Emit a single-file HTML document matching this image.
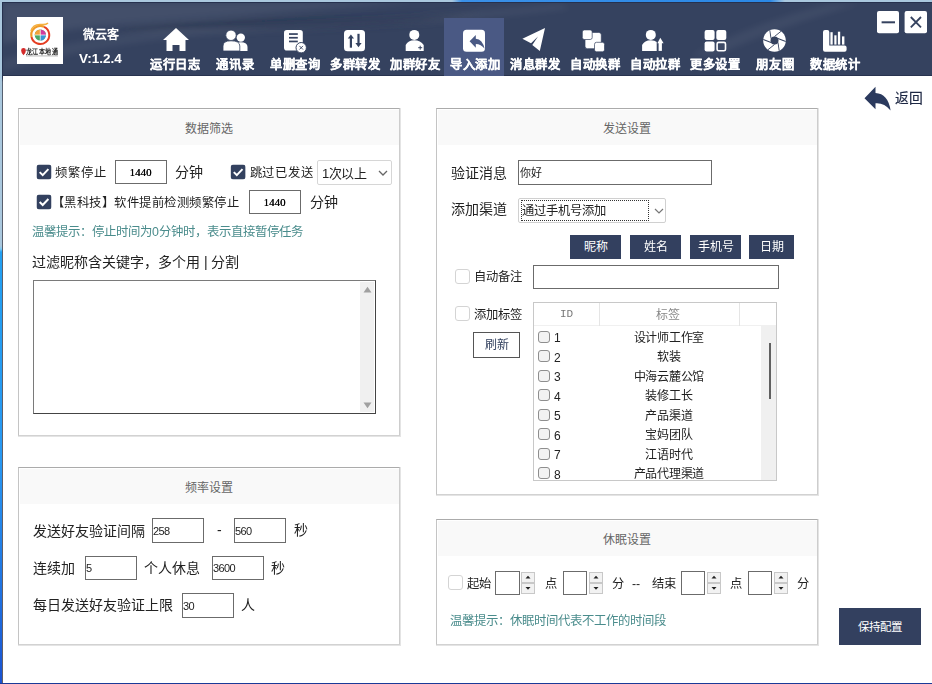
<!DOCTYPE html>
<html lang="zh-CN"><head><meta charset="utf-8">
<style>
*{box-sizing:border-box;margin:0;padding:0}
html,body{width:932px;height:684px;overflow:hidden;background:#fff;font-family:"Liberation Sans",sans-serif;color:#222}
.a{position:absolute}
#win{position:absolute;left:0;top:0;width:932px;height:684px;background:#fff}
#lstrip{position:absolute;left:0;top:0;width:2px;height:684px;background:linear-gradient(#aac8de 0,#aac8de 246px,#7ccaf6 249px,#22a0f2 252px,#2898f2 460px,#1f70e0 600px,#1a52d0 684px)}
#ldark{position:absolute;left:2px;top:2px;width:1px;height:682px;background:linear-gradient(#26314e 0,#26314e 76px,#566070 80px,#635f66 684px)}
#tdark{position:absolute;left:2px;top:2px;width:930px;height:1px;background:#26314e}
#tstrip{position:absolute;left:0;top:0;width:932px;height:2px;background:linear-gradient(90deg,#aac8de 0,#aac8de 452px,#3a90e8 462px,#2a88e6 770px,#aac8de 785px,#aac8de 932px)}
#bline{position:absolute;left:0;top:683px;width:932px;height:1px;background:#1a3a98}
#hdr{position:absolute;left:2px;top:2px;width:930px;height:74px;background:#35425f;overflow:hidden}
.nav{position:absolute;top:0;width:60px;height:74px;color:#fff;font-weight:bold;font-size:12.3px;letter-spacing:0.8px;text-indent:0.8px;text-align:center;-webkit-text-stroke:0.25px #fff}
.nav span{position:absolute;left:0;width:60px;top:58px;line-height:14px;white-space:nowrap}
.nav svg{position:absolute;left:18px;top:26px}
.panel{position:absolute;border-top:1px solid #ababab;border-left:1px solid #c4c4c4;border-right:1px solid #cdcdcd;border-bottom:1px solid #d2d2d2;box-shadow:1px 0 0 #e4e4e4,0 1px 0 #e4e4e4,1px 1px 0 #e4e4e4}
.ph{position:absolute;left:1px;right:0;top:1px;height:35px;background:#f9f9f9;text-align:center;font-size:12px;color:#666;line-height:38px;padding-right:2px}
.t{position:absolute;white-space:nowrap;line-height:1}
.inp{position:absolute;border:1px solid #6b6b6b;background:#fff}
.cbn{position:absolute;width:15px;height:15px;background:#33415f;border-radius:3px}
.cbe{position:absolute;width:15px;height:15px;border:1px solid #d4d4d4;border-radius:3px;background:#fff}
.btn{position:absolute;background:#33405f;color:#fff;font-size:12px;text-align:center}
.tip{color:#4a8c8c;font-size:12px}
</style></head><body>
<div id="win">
<div id="hdr"></div>
<div class="a" style="left:2px;top:75px;width:930px;height:1px;background:#28334f"></div>
<svg class="a" style="left:0;top:0" width="932" height="76">
 <defs>
  <filter id="bl" x="-20%" y="-50%" width="140%" height="200%"><feGaussianBlur stdDeviation="3"/></filter>
 </defs>
 <g filter="url(#bl)">
 <path d="M2 2 L420 2 Q260 14 120 24 Q50 30 2 44 Z" fill="#fff" opacity="0.07"/>
 <path d="M2 60 Q90 32 260 24 Q420 17 560 4 L570 9 Q430 26 270 31 Q110 38 2 72 Z" fill="#fff" opacity="0.05"/>
 <path d="M690 56 Q760 20 830 4 L860 4 Q780 26 715 56 Z" fill="#fff" opacity="0.05"/>
 <path d="M100 31 Q200 19 300 18 Q420 17 480 12 Q430 26 300 29 Q200 30 100 31 Z" fill="#141d38" opacity="0.22"/>
 </g>
</svg>

<div class="a" style="left:444px;top:18px;width:60px;height:58px;background:#4a5984"></div>
<div class="a" style="left:17px;top:17px;width:46px;height:47px;background:#fff"></div>
<svg class="a" style="left:0;top:0" width="932" height="76" viewBox="0 0 932 76">
 <!-- logo -->
 <path d="M31.5 37 A9 9 0 0 1 44 26.8" fill="none" stroke="#f09a28" stroke-width="2.2"/>
 <path d="M31 31 Q33 24 41 24.5 Q46 25 48 23" fill="none" stroke="#f5b040" stroke-width="1.6"/>
 <path d="M44 26.8 A9 9 0 1 1 31.5 37" fill="none" stroke="#e43d22" stroke-width="2"/>
 <circle cx="40.3" cy="35" r="5.6" fill="#4aa868"/>
 <path d="M40.3 35 L40.3 29.4 A5.6 5.6 0 0 1 45.9 35 Z" fill="#d33a9e"/>
 <path d="M40.3 35 L45.9 35 A5.6 5.6 0 0 1 40.3 40.6 Z" fill="#3c92d6"/>
 <path d="M40.3 35 L34.7 35 A5.6 5.6 0 0 1 40.3 29.4 Z" fill="#f2a23a"/>
 <path d="M40.3 29.4 L40.3 40.6 M34.7 35 L45.9 35" stroke="#fff" stroke-width="0.7"/>
 <path d="M23.5 48 a2.4 2.4 0 0 1 2.4 2.4 q0 2.2 -2.4 4.8 q-2.4 -2.6 -2.4 -4.8 a2.4 2.4 0 0 1 2.4 -2.4z" fill="#d42a2a"/>
 <text x="26" y="54" font-size="6.6" font-weight="bold" fill="#1a1a1a" font-family="Liberation Sans" textLength="32" lengthAdjust="spacingAndGlyphs">龙江本地通</text>
 <rect x="26" y="55.6" width="32" height="0.7" fill="#999"/>
 <!-- house -->
 <path d="M176 28 L189 40 L185.5 40 L185.5 51 L179.5 51 L179.5 45 L172.5 45 L172.5 51 L166.5 51 L166.5 40 L163 40 Z" fill="#fff"/>
 <!-- people -->
 <circle cx="240.8" cy="37.6" r="4.2" fill="#fff"/>
 <path d="M236 51 L236 45 Q236 42.3 240.8 42.3 Q247.5 42.3 247.5 47 L247.5 51 Z" fill="#fff"/>
 <circle cx="231" cy="35.3" r="5.2" fill="#fff" stroke="#35425f" stroke-width="0.8"/>
 <path d="M223 51 L223 46 Q223 40.8 231 40.8 Q239.8 40.8 239.8 46 L239.8 51 Z" fill="#fff" stroke="#35425f" stroke-width="0.8"/>
 <!-- doc x -->
 <rect x="284" y="30" width="18.8" height="20.5" rx="2.8" fill="#fff"/>
 <rect x="289" y="33.199999999999996" width="8.8" height="1.7" fill="#35425f"/>
 <rect x="289" y="36.9" width="8.8" height="1.7" fill="#35425f"/>
 <rect x="289" y="40.6" width="8.8" height="1.7" fill="#35425f"/>
 <circle cx="301.2" cy="47.7" r="5.2" fill="#fff" stroke="#35425f" stroke-width="1"/>
 <path d="M299.4 45.9 L303 49.5 M303 45.9 L299.4 49.5" stroke="#35425f" stroke-width="0.9"/>
 <!-- arrows -->
 <rect x="344" y="30" width="21" height="21.2" rx="3.5" fill="#fff"/>
 <path d="M350.9 47.7 L350.9 37.5" stroke="#35425f" stroke-width="2.2"/>
 <path d="M347.8 38.5 L350.9 34.5 L354 38.5 Z" fill="#35425f"/>
 <path d="M358.5 33.8 L358.5 44" stroke="#35425f" stroke-width="2.2"/>
 <path d="M355.4 43 L358.5 47.3 L361.6 43 Z" fill="#35425f"/>
 <!-- person plus -->
 <circle cx="414.3" cy="34.9" r="5" fill="#fff"/>
 <path d="M405.7 51.1 L405.7 45 Q408 40.2 414.3 40.2 Q420.6 40.2 423.7 45 L423.7 51.1 Z" fill="#fff"/>
 <path d="M420.2 45.7 L420.2 49.7 M418.2 47.7 L422.2 47.7" stroke="#35425f" stroke-width="1"/>
 <!-- reply -->
 <rect x="463" y="29.7" width="22" height="22.1" rx="3.5" fill="#fff"/>
 <path d="M469.6 41.3 L475.8 34.9 L475.8 38.8 Q482.5 39.3 484.6 48.8 Q481 44 475.8 44 L475.8 47.7 Z" fill="#4a5984"/>
 <!-- plane -->
 <path d="M545 28 L522.4 38.8 L531 43.3 L538 36.5 L532.3 45 L539.8 51.1 Z" fill="#fff"/>
 <!-- overlapping squares -->
 <rect x="585" y="32.4" width="16.3" height="16.3" rx="2.5" fill="#fff" stroke="#35425f" stroke-width="0.7"/>
 <rect x="582.3" y="29.9" width="9.9" height="9.6" rx="2" fill="#fff" stroke="#35425f" stroke-width="0.7"/>
 <rect x="594.5" y="42.3" width="10" height="9.5" rx="2" fill="#fff" stroke="#35425f" stroke-width="0.7"/>
 <!-- person up -->
 <circle cx="650.8" cy="34.9" r="5" fill="#fff"/>
 <path d="M642.1 50.9 L642.1 45 Q644.5 40.2 650.8 40.2 Q655 40.2 656.7 42 L656.7 50.9 Z" fill="#fff"/>
 <rect x="658.6" y="42.3" width="3.3" height="8.6" fill="#fff"/>
 <path d="M657.4 43.2 L660.3 37.8 L663.6 43.2 Z" fill="#fff"/>
 <!-- grid -->
 <rect x="704.6" y="30.1" width="10" height="10" rx="2" fill="#fff"/>
 <rect x="716.3" y="30.1" width="10" height="10" rx="2" fill="#fff"/>
 <rect x="704.6" y="41.6" width="10" height="10" rx="2" fill="#fff"/>
 <rect x="717.1" y="42.4" width="8.4" height="8.4" rx="1.5" fill="none" stroke="#fff" stroke-width="1.6"/>
 <!-- aperture -->
 <g transform="translate(774.5 40.5)">
  <circle r="11.3" fill="#fff"/>
  <circle r="4" fill="#35425f"/>
  <g stroke="#35425f" stroke-width="0.9">
   <path d="M0 -4 L6.5 -9.2" transform="rotate(0)"/>
   <path d="M0 -4 L6.5 -9.2" transform="rotate(60)"/>
   <path d="M0 -4 L6.5 -9.2" transform="rotate(120)"/>
   <path d="M0 -4 L6.5 -9.2" transform="rotate(180)"/>
   <path d="M0 -4 L6.5 -9.2" transform="rotate(240)"/>
   <path d="M0 -4 L6.5 -9.2" transform="rotate(300)"/>
  </g>
 </g>
 <!-- bar chart -->
 <path d="M823 32 Q823 30 825 30 L827.3 30 Q829.3 30 829.3 32 L829.3 45.6 L844.6 45.6 Q846.6 45.6 846.6 47.6 L846.6 49.8 Q846.6 51.8 844.6 51.8 L825 51.8 Q823 51.8 823 49.8 Z" fill="#fff"/>
 <rect x="830.4" y="32.2" width="2.3" height="12.4" fill="#fff"/>
 <rect x="834.3" y="35.3" width="2.2" height="9.3" fill="#fff"/>
 <rect x="837.9" y="31.7" width="2.3" height="12.9" fill="#fff"/>
 <rect x="842" y="36.4" width="2.4" height="8.2" fill="#fff"/>
 <!-- window buttons -->
 <rect x="877" y="11" width="22" height="22.3" rx="2" fill="#fff"/>
 <rect x="881.6" y="21.3" width="13.4" height="2" fill="#35425f"/>
 <rect x="904.6" y="11" width="22.4" height="22.3" rx="2" fill="#fff"/>
 <path d="M910.8 17 L921 27.3 M921 17 L910.8 27.3" stroke="#35425f" stroke-width="1.8"/>
</svg>
<div class="t" style="left:83px;top:29px;font-size:12px;font-weight:bold;color:#fff">微云客</div>
<div class="t" style="left:79px;top:52px;font-size:13.5px;font-weight:bold;color:#fff">V:1.2.4</div>
<div class="nav" style="left:145px"><span>运行日志</span></div>
<div class="nav" style="left:205px"><span>通讯录</span></div>
<div class="nav" style="left:265px"><span>单删查询</span></div>
<div class="nav" style="left:325px"><span>多群转发</span></div>
<div class="nav" style="left:385px"><span>加群好友</span></div>
<div class="nav" style="left:445px"><span>导入添加</span></div>
<div class="nav" style="left:505px"><span>消息群发</span></div>
<div class="nav" style="left:565px"><span>自动换群</span></div>
<div class="nav" style="left:625px"><span>自动拉群</span></div>
<div class="nav" style="left:685px"><span>更多设置</span></div>
<div class="nav" style="left:745px"><span>朋友圈</span></div>
<div class="nav" style="left:805px"><span>数据统计</span></div>

<div id="tstrip"></div>
<div id="lstrip"></div>
<div id="ldark"></div><div id="tdark"></div>
<div id="bline"></div>

<!-- panel 1 -->
<div class="panel" style="left:18px;top:108px;width:382px;height:328px"><div class="ph">数据筛选</div></div>
<!-- panel 2 -->
<div class="panel" style="left:18px;top:467px;width:382px;height:178px"><div class="ph">频率设置</div></div>
<!-- panel 3 -->
<div class="panel" style="left:436px;top:108px;width:382px;height:387px"><div class="ph">发送设置</div></div>
<!-- panel 4 -->
<div class="panel" style="left:436px;top:519px;width:382px;height:126px"><div class="ph">休眠设置</div></div>

<!-- panel 1 content -->
<svg class="a" style="left:0;top:0" width="932" height="684">
 <defs><symbol id="ck" viewBox="0 0 15 15"><rect width="15" height="15" rx="3" fill="#33415f"/><path d="M3.2 7.6 L6.2 10.6 L11.9 4.6" fill="none" stroke="#fff" stroke-width="2"/></symbol></defs>
 <use href="#ck" x="36.5" y="164.5" width="15" height="15"/>
 <use href="#ck" x="230.6" y="164.5" width="15" height="15"/>
 <use href="#ck" x="36.5" y="194.4" width="15" height="15"/>
</svg>
<div class="t" style="left:55px;top:166.5px;font-size:12.3px;letter-spacing:0.9px">频繁停止</div>
<div class="inp" style="left:115px;top:160px;width:52px;height:24px;font-family:'Liberation Serif',serif;font-size:11px;text-align:center;line-height:23px;color:#000;text-shadow:0.3px 0 0 #000;padding-right:1px">1440</div>
<div class="t" style="left:175px;top:165px;font-size:14px">分钟</div>
<div class="t" style="left:249.5px;top:166.5px;font-size:12.3px;letter-spacing:0.8px">跳过已发送</div>
<div class="a" style="left:317px;top:160px;width:75px;height:25px;border:1px solid #d6d6d6;border-radius:2px;font-size:13px;line-height:25px;padding-left:4px;letter-spacing:-0.4px">1次以上</div>
<svg class="a" style="left:378px;top:170px" width="10" height="7"><path d="M1 1 L5 5 L9 1" fill="none" stroke="#666" stroke-width="1.3"/></svg>
<div class="t" style="left:51.5px;top:196.5px;font-size:12.3px;letter-spacing:0.5px">【黑科技】软件提前检测频繁停止</div>
<div class="inp" style="left:249px;top:190px;width:52px;height:24px;font-family:'Liberation Serif',serif;font-size:11px;text-align:center;line-height:23px;color:#000;text-shadow:0.3px 0 0 #000;padding-right:1px">1440</div>
<div class="t" style="left:310px;top:195px;font-size:14px">分钟</div>
<div class="t tip" style="left:32px;top:225.5px;font-size:12.4px">温馨提示：停止时间为0分钟时，表示直接暂停任务</div>
<div class="t" style="left:32px;top:255px;font-size:14px">过滤昵称含关键字，多个用 | 分割</div>
<div class="a" style="left:33px;top:280px;width:343px;height:134px;border:1px solid #7a7a7a;border-right-color:#444;border-bottom-color:#444;background:#fff">
 <div class="a" style="right:1px;top:1px;width:14px;height:130px;background:#f0f0f0"></div>
 <svg class="a" style="right:3.5px;top:4.5px" width="9" height="7"><path d="M0.5 6.5 L4.5 0.8 L8.5 6.5Z" fill="#a0a0a0"/></svg>
 <svg class="a" style="right:3.5px;bottom:4.5px" width="9" height="7"><path d="M0.5 0.5 L4.5 6.2 L8.5 0.5Z" fill="#a0a0a0"/></svg>
</div>
<!-- panel 2 content -->
<div class="t" style="left:33px;top:523.5px;font-size:14px">发送好友验证间隔</div>
<div class="inp" style="left:152px;top:518px;width:52px;height:25px;font-size:11px;line-height:24px;padding-left:0;letter-spacing:-0.6px">258</div>
<div class="t" style="left:217px;top:523px;font-size:14px">-</div>
<div class="inp" style="left:234px;top:518px;width:52px;height:25px;font-size:11px;line-height:24px;padding-left:0;letter-spacing:-0.6px">560</div>
<div class="t" style="left:294px;top:523px;font-size:14px">秒</div>
<div class="t" style="left:33px;top:561px;font-size:14px">连续加</div>
<div class="inp" style="left:85px;top:556px;width:52px;height:24px;font-size:11px;line-height:23px;padding-left:0;letter-spacing:-0.6px">5</div>
<div class="t" style="left:144px;top:561px;font-size:14px">个人休息</div>
<div class="inp" style="left:212px;top:556px;width:52px;height:24px;font-size:11px;line-height:23px;padding-left:0;letter-spacing:-0.6px">3600</div>
<div class="t" style="left:271px;top:561px;font-size:14px">秒</div>
<div class="t" style="left:33px;top:598px;font-size:14px">每日发送好友验证上限</div>
<div class="inp" style="left:182px;top:593px;width:52px;height:25px;font-size:11px;line-height:24px;padding-left:0;letter-spacing:-0.6px">30</div>
<div class="t" style="left:241px;top:598px;font-size:14px">人</div>
<!-- panel 3 content -->
<div class="t" style="left:451px;top:166px;font-size:14px">验证消息</div>
<div class="inp" style="left:518px;top:160px;width:194px;height:24.5px;font-size:11px;line-height:24px;padding-left:1px">你好</div>
<div class="t" style="left:451px;top:202px;font-size:14px">添加渠道</div>
<div class="a" style="left:518px;top:197.5px;width:148px;height:25.5px;border:1px solid #d0d0d0;border-radius:2px;background:#fff"></div>
<div class="a" style="left:521px;top:200px;width:128px;height:21px;border:1px dotted #333;font-size:12.3px;line-height:21px;padding-left:0">通过手机号添加</div>
<svg class="a" style="left:654px;top:208px" width="10" height="7"><path d="M1 1 L5 5 L9 1" fill="none" stroke="#777" stroke-width="1.2"/></svg>
<div class="btn" style="left:570px;top:235px;width:51px;height:24px;line-height:24px">昵称</div>
<div class="btn" style="left:630px;top:235px;width:51px;height:24px;line-height:24px">姓名</div>
<div class="btn" style="left:690px;top:235px;width:51px;height:24px;line-height:24px">手机号</div>
<div class="btn" style="left:749px;top:235px;width:45px;height:24px;line-height:24px">日期</div>
<div class="cbe" style="left:454.5px;top:268.5px"></div>
<div class="t" style="left:473.5px;top:270.5px;font-size:12.3px">自动备注</div>
<div class="inp" style="left:533px;top:265px;width:246px;height:24px"></div>
<div class="cbe" style="left:454.5px;top:306px"></div>
<div class="t" style="left:473.5px;top:309px;font-size:12.3px">添加标签</div>
<div class="a" style="left:473px;top:332px;width:47px;height:26px;border:1px solid #555;background:#fff;font-size:12px;color:#33415f;text-align:center;line-height:24px">刷新</div>
<div class="a" style="left:533px;top:302px;width:244px;height:179px;border:1px solid #c8c8c8;background:#fff;overflow:hidden">
 <div class="a" style="left:0;top:0;width:242px;height:23px;background:#fff;border-bottom:1px solid #f0f0f0"></div>
 <div class="a" style="left:65px;top:0;width:1px;height:23px;background:#e5e5e5"></div>
 <div class="a" style="left:205px;top:0;width:1px;height:23px;background:#e5e5e5"></div>
 <div class="t" style="left:26px;top:6px;font-family:'Liberation Mono',monospace;font-size:11px;color:#777">ID</div>
 <div class="t" style="left:122px;top:6px;font-size:12px;color:#888">标签</div>
 <div class="a" style="left:227px;top:23px;width:16px;height:156px;background:#f0f0f0"></div>
 <div class="a" style="left:235px;top:40px;width:2px;height:56px;background:#606060"></div>
</div>
<div class="a" style="left:537.5px;top:330.6px;width:12px;height:12px;border:1px solid #8e8e8e;border-radius:3px;background:#f2f2f2"></div>
<div class="t" style="left:554px;top:332.1px;font-size:12px">1</div>
<div class="t" style="left:599px;width:140px;text-align:center;top:331.6px;font-size:12px;letter-spacing:-0.25px;text-indent:-0.25px">设计师工作室</div>
<div class="a" style="left:537.5px;top:350.2px;width:12px;height:12px;border:1px solid #8e8e8e;border-radius:3px;background:#f2f2f2"></div>
<div class="t" style="left:554px;top:351.7px;font-size:12px">2</div>
<div class="t" style="left:599px;width:140px;text-align:center;top:351.2px;font-size:12px;letter-spacing:-0.25px;text-indent:-0.25px">软装</div>
<div class="a" style="left:537.5px;top:369.7px;width:12px;height:12px;border:1px solid #8e8e8e;border-radius:3px;background:#f2f2f2"></div>
<div class="t" style="left:554px;top:371.2px;font-size:12px">3</div>
<div class="t" style="left:599px;width:140px;text-align:center;top:370.7px;font-size:12px;letter-spacing:-0.25px;text-indent:-0.25px">中海云麓公馆</div>
<div class="a" style="left:537.5px;top:389.3px;width:12px;height:12px;border:1px solid #8e8e8e;border-radius:3px;background:#f2f2f2"></div>
<div class="t" style="left:554px;top:390.8px;font-size:12px">4</div>
<div class="t" style="left:599px;width:140px;text-align:center;top:390.3px;font-size:12px;letter-spacing:-0.25px;text-indent:-0.25px">装修工长</div>
<div class="a" style="left:537.5px;top:408.8px;width:12px;height:12px;border:1px solid #8e8e8e;border-radius:3px;background:#f2f2f2"></div>
<div class="t" style="left:554px;top:410.3px;font-size:12px">5</div>
<div class="t" style="left:599px;width:140px;text-align:center;top:409.8px;font-size:12px;letter-spacing:-0.25px;text-indent:-0.25px">产品渠道</div>
<div class="a" style="left:537.5px;top:428.4px;width:12px;height:12px;border:1px solid #8e8e8e;border-radius:3px;background:#f2f2f2"></div>
<div class="t" style="left:554px;top:429.9px;font-size:12px">6</div>
<div class="t" style="left:599px;width:140px;text-align:center;top:429.4px;font-size:12px;letter-spacing:-0.25px;text-indent:-0.25px">宝妈团队</div>
<div class="a" style="left:537.5px;top:447.9px;width:12px;height:12px;border:1px solid #8e8e8e;border-radius:3px;background:#f2f2f2"></div>
<div class="t" style="left:554px;top:449.4px;font-size:12px">7</div>
<div class="t" style="left:599px;width:140px;text-align:center;top:448.9px;font-size:12px;letter-spacing:-0.25px;text-indent:-0.25px">江语时代</div>
<div class="a" style="left:537.5px;top:467.4px;width:12px;height:12px;border:1px solid #8e8e8e;border-radius:3px;background:#f2f2f2"></div>
<div class="t" style="left:554px;top:468.9px;font-size:12px">8</div>
<div class="t" style="left:599px;width:140px;text-align:center;top:468.4px;font-size:12px;letter-spacing:-0.25px;text-indent:-0.25px">产品代理渠道</div>
<!-- panel 4 content -->
<div class="cbe" style="left:447.5px;top:574.5px"></div>
<div class="t" style="left:467px;top:578px;font-size:12.3px">起始</div>
<div class="t" style="left:545px;top:578px;font-size:12.3px">点</div>
<div class="t" style="left:612px;top:578px;font-size:12.3px">分</div>
<div class="t" style="left:632px;top:578px;font-size:12.3px">--</div>
<div class="t" style="left:652px;top:578px;font-size:12.3px">结束</div>
<div class="t" style="left:730px;top:578px;font-size:12.3px">点</div>
<div class="t" style="left:797px;top:578px;font-size:12.3px">分</div>
<div class="t tip" style="left:450px;top:615px;font-size:12.4px">温馨提示：休眠时间代表不工作的时间段</div>
<div class="inp" style="left:495.4px;top:571px;width:24.5px;height:24px"></div>
<div class="a" style="left:521.4px;top:572px;width:14px;height:11px;border:1px solid #c8c8c8;background:#f2f2f2"></div>
<div class="a" style="left:521.4px;top:583px;width:14px;height:11px;border:1px solid #c8c8c8;background:#f2f2f2"></div>
<svg class="a" style="left:525.4px;top:575px" width="6" height="16"><path d="M0.5 3.5 L3 0.8 L5.5 3.5Z M0.5 12 L3 14.7 L5.5 12Z" fill="#222"/></svg>
<div class="inp" style="left:562.7px;top:571px;width:24.5px;height:24px"></div>
<div class="a" style="left:588.7px;top:572px;width:14px;height:11px;border:1px solid #c8c8c8;background:#f2f2f2"></div>
<div class="a" style="left:588.7px;top:583px;width:14px;height:11px;border:1px solid #c8c8c8;background:#f2f2f2"></div>
<svg class="a" style="left:592.7px;top:575px" width="6" height="16"><path d="M0.5 3.5 L3 0.8 L5.5 3.5Z M0.5 12 L3 14.7 L5.5 12Z" fill="#222"/></svg>
<div class="inp" style="left:680.5px;top:571px;width:24.5px;height:24px"></div>
<div class="a" style="left:706.5px;top:572px;width:14px;height:11px;border:1px solid #c8c8c8;background:#f2f2f2"></div>
<div class="a" style="left:706.5px;top:583px;width:14px;height:11px;border:1px solid #c8c8c8;background:#f2f2f2"></div>
<svg class="a" style="left:710.5px;top:575px" width="6" height="16"><path d="M0.5 3.5 L3 0.8 L5.5 3.5Z M0.5 12 L3 14.7 L5.5 12Z" fill="#222"/></svg>
<div class="inp" style="left:747.7px;top:571px;width:24.5px;height:24px"></div>
<div class="a" style="left:773.7px;top:572px;width:14px;height:11px;border:1px solid #c8c8c8;background:#f2f2f2"></div>
<div class="a" style="left:773.7px;top:583px;width:14px;height:11px;border:1px solid #c8c8c8;background:#f2f2f2"></div>
<svg class="a" style="left:777.7px;top:575px" width="6" height="16"><path d="M0.5 3.5 L3 0.8 L5.5 3.5Z M0.5 12 L3 14.7 L5.5 12Z" fill="#222"/></svg>
<svg class="a" style="left:0;top:0" width="932" height="120"><path d="M864.5 98.2 L875.5 86.8 L875.5 93 Q888 93.5 890.6 110.5 Q884 102.5 875.5 103.3 L875.5 109.2 Z" fill="#2b3a5e"/></svg>
<div class="t" style="left:895px;top:91.5px;font-size:13.8px;color:#1e2844;-webkit-text-stroke:0.2px #1e2844">返回</div>
<div class="btn" style="left:839px;top:608px;width:82px;height:37px;line-height:39px;font-size:11.5px">保持配置</div>
</div>
</body></html>
